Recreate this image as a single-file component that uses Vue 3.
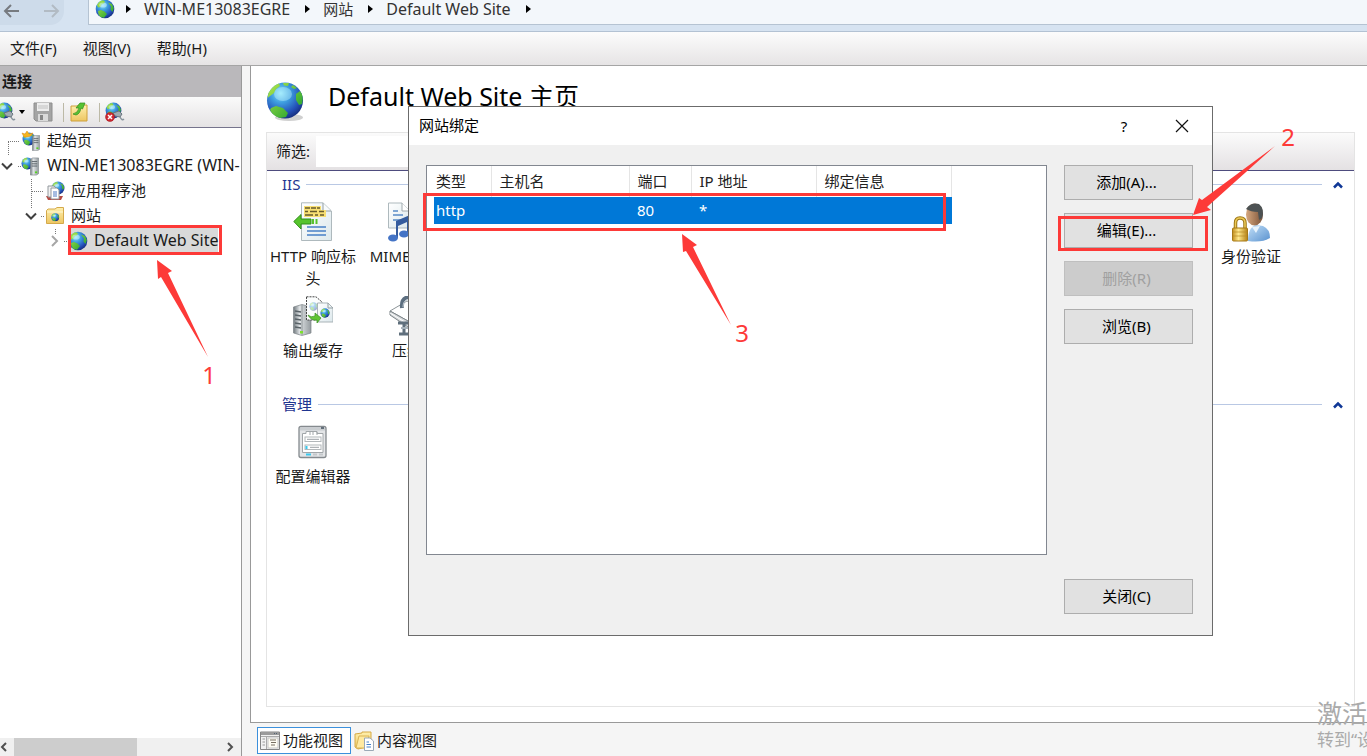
<script setup>
import { ref } from 'vue'

const crumbs = [
  { label: 'WIN-ME13083EGRE', latin: true },
  { label: '网站' },
  { label: 'Default Web Site', latin: true },
]
const menus = ['文件(F)', '视图(V)', '帮助(H)']
const tree = [
  { label: '起始页', icon: 'i-start', level: 0, open: null },
  { label: 'WIN-ME13083EGRE (WIN-', icon: 'i-server', level: 0, open: true, latin: true },
  { label: '应用程序池', icon: 'i-pool', level: 1, open: null },
  { label: '网站', icon: 'i-sites', level: 1, open: true },
  { label: 'Default Web Site', icon: 'i-globe', level: 2, open: false, selected: true, latin: true },
]
const groups = [
  {
    title: 'IIS',
    items: [
      { label: 'HTTP 响应标头', icon: 'i-http' },
      { label: 'MIME 类型', icon: 'i-mime' },
      { label: '身份验证', icon: 'i-auth', last: true },
      { label: '输出缓存', icon: 'i-cache' },
      { label: '压缩', icon: 'i-zip' },
    ],
  },
  { title: '管理', items: [{ label: '配置编辑器', icon: 'i-config' }] },
]
const columns = ['类型', '主机名', '端口', 'IP 地址', '绑定信息']
const bindings = [['http', '', '80', '*', '']]
const filter = ref('')
</script>

<template>
  <div class="app">
    <svg class="defs" aria-hidden="true">
      <defs>
        <radialGradient id="sea" cx="0.38" cy="0.3" r="0.75">
          <stop offset="0" stop-color="#8fe4fb" />
          <stop offset="0.35" stop-color="#3f9fe0" />
          <stop offset="0.75" stop-color="#2450b8" />
          <stop offset="1" stop-color="#142a78" />
        </radialGradient>
        <linearGradient id="land" x1="0" y1="0" x2="1" y2="1">
          <stop offset="0" stop-color="#b6e84c" />
          <stop offset="1" stop-color="#119a2c" />
        </linearGradient>
        <linearGradient id="metal" x1="0" x2="1">
          <stop offset="0" stop-color="#70787d" />
          <stop offset="0.35" stop-color="#dfe3e5" />
          <stop offset="1" stop-color="#949b9f" />
        </linearGradient>
        <linearGradient id="folder" x1="0" y1="0" x2="0" y2="1">
          <stop offset="0" stop-color="#fff0ae" />
          <stop offset="1" stop-color="#edc662" />
        </linearGradient>
        <linearGradient id="paper" x1="0" y1="0" x2="1" y2="1">
          <stop offset="0" stop-color="#ffffff" />
          <stop offset="1" stop-color="#dce8ec" />
        </linearGradient>
        <linearGradient id="skin" x1="0" x2="1">
          <stop offset="0" stop-color="#d6a77e" />
          <stop offset="1" stop-color="#7b5238" />
        </linearGradient>
        <linearGradient id="shirt" x1="0" y1="0" x2="1" y2="1">
          <stop offset="0" stop-color="#c3e0f8" />
          <stop offset="1" stop-color="#5a92cf" />
        </linearGradient>
        <linearGradient id="brass" x1="0" x2="1">
          <stop offset="0" stop-color="#c38f1d" />
          <stop offset="0.4" stop-color="#ffe98c" />
          <stop offset="1" stop-color="#b58114" />
        </linearGradient>
      </defs>
      <symbol id="i-globe" viewBox="0 0 20 20">
        <circle cx="10" cy="10" r="9.3" fill="url(#sea)" />
        <path d="M2 6Q4 2 8 1.300L10 2.500 9 4.500 6.500 5.500 5.500 8 3 8.500ZM13 3.500 17 5 18.800 9 17.500 13 15.500 10.500 16 7.500ZM3 12 6 11 9.500 12.500 12 15 9 18.800 5.500 18 3.500 15.500Z" fill="url(#land)" />
        <ellipse cx="8" cy="6" rx="3.800" ry="2.600" fill="#d7f8ff" opacity="0.5" />
      </symbol>
      <symbol id="i-big" viewBox="0 0 40 40">
        <ellipse cx="23" cy="35.500" rx="14" ry="3.500" fill="#777" opacity="0.35" />
        <circle cx="19" cy="18.500" r="18" fill="url(#sea)" />
        <path d="M2.500 11Q7 3 13 1.500L14 4 10 7 8 11 4 14 1.500 16ZM17 1 23 1 22 4 18 3.500ZM30 12 34 9Q38 14 36 22L33 23 30 18ZM27 3 31 6 28 7 25 5ZM5 26 10 24 17 26 22 31 20 35 14 36Q7 34 4 28Z" fill="url(#land)" />
        <ellipse cx="17" cy="12" rx="9" ry="7" fill="#c8f8ff" opacity="0.4" />
      </symbol>
      <symbol id="tower" viewBox="0 0 10 20">
        <path d="M0.500 2 3 0.500H9.500V18L7 19.500H0.500Z" fill="url(#metal)" stroke="#7d8589" stroke-width="0.700" />
        <path d="M2 4.500H8M2 7H8M2 9.500H8" stroke="#576065" />
        <rect x="5.500" y="15.500" width="2.500" height="2" fill="#55d320" />
      </symbol>
      <symbol id="i-server" viewBox="0 0 20 20">
        <use href="#i-globe" x="0" y="1" width="13" height="13" />
        <use href="#tower" x="9" y="1" width="9" height="19" />
      </symbol>
      <symbol id="i-start" viewBox="0 0 20 20">
        <use href="#i-globe" x="1" y="1" width="14" height="14" />
        <path d="M1 2 4 3 6 0 8 3 12 2 10 5 6 6 3 6Z" fill="#f6b51e" stroke="#dc8710" stroke-width="0.500" />
        <use href="#tower" x="11" y="4" width="8" height="16" />
      </symbol>
      <symbol id="i-pool" viewBox="0 0 20 20">
        <use href="#i-globe" x="6" y="0" width="14" height="14" />
        <path d="M1 15H18L16 19H3Z" fill="#b64a43" />
        <path d="M3 5H9L11 7V16H3Z" fill="#f2f2f2" stroke="#92989d" />
        <path d="M6 7H12L14 9V18H6Z" fill="#fff" stroke="#92989d" />
        <path d="M8 11H12M8 13H12M8 15H12" stroke="#4c7bc4" />
      </symbol>
      <symbol id="i-sites" viewBox="0 0 20 20">
        <path d="M1.500 4.500 3 3H10L12 1.500H18.500V17.500H1.500Z" fill="url(#folder)" stroke="#d4a94b" />
        <path d="M2 6H18" stroke="#fff8d4" />
        <use href="#i-globe" x="6" y="7" width="8.500" height="8.500" />
      </symbol>
      <symbol id="i-plug" viewBox="0 0 20 20">
        <use href="#i-globe" x="0" y="0" width="17" height="17" />
        <path d="M8 11 14 9 17 12 15 15 10 14Z" fill="#9fa9b1" stroke="#68757f" />
        <path d="M15 15Q17 19 19 17" fill="none" stroke="#87939c" stroke-width="1.500" />
      </symbol>
      <symbol id="i-save" viewBox="0 0 20 20">
        <path d="M1 1H19V19H3L1 17Z" fill="#a4a4a4" stroke="#8e8e8e" />
        <rect x="4" y="1" width="12" height="8" fill="#ededed" />
        <path d="M5 4H15M5 6H15" stroke="#c1c1c1" />
        <rect x="5" y="12" width="10" height="7" fill="#dadada" />
        <rect x="7" y="13" width="3" height="5" fill="#868686" />
      </symbol>
      <symbol id="i-up" viewBox="0 0 20 20">
        <path d="M2 4H8L10 3H18V19H2Z" fill="url(#folder)" stroke="#cfa03a" />
        <path d="M4 12Q9 11 10 6L7 6 11 1 16 1 13.500 7 12 6Q11 12 7 13Z" fill="#56c233" stroke="#318c1d" stroke-width="0.700" />
      </symbol>
      <symbol id="i-stop" viewBox="0 0 20 20">
        <use href="#i-plug" width="20" height="20" />
        <circle cx="5" cy="15" r="4.500" fill="#cf2730" stroke="#9a141d" stroke-width="0.500" />
        <path d="M3 13 7 17M7 13 3 17" stroke="#fff" stroke-width="1.500" />
      </symbol>
      <symbol id="i-http" viewBox="0 0 40 40">
        <path d="M8.500 0.800H30L38.500 9V38.500H8.500Z" fill="url(#paper)" stroke="#aeb9bd" />
        <path d="M30 1V9H38" fill="#f8fbfc" stroke="#929da2" />
        <path d="M11 4H28V8H33V15H11Z" fill="#f8df73" />
        <path d="M12 6H17M18 6H23M24 6H27M12 9.500H15M17 9.500H24M26 9.500H31M12 13H20M22 13H25M27 13H31" stroke="#665b2c" stroke-width="1.500" />
        <path d="M0.800 19.500 8 12.500V17H18V22H8V27Z" fill="#57c42d" stroke="#31901a" />
        <path d="M20 17V22M23.500 17V22" stroke="#57c42d" stroke-width="2" />
        <path d="M14 25H33M14 29H33M14 33H33" stroke="#4780c6" stroke-width="1.500" />
      </symbol>
      <symbol id="i-mime" viewBox="0 0 40 40">
        <path d="M1.500 1H15L23 9V26H1.500Z" fill="url(#paper)" stroke="#aeb9bd" />
        <path d="M15 1V9H23" fill="#fff" stroke="#a1aaae" />
        <path d="M6 9H11M6 13H16M6 18H17" stroke="#588ac6" stroke-width="1.500" />
        <path d="M9 19 23 13V31H20V20L11 24V36H9Z" fill="#355c9e" />
        <ellipse cx="6" cy="36" rx="5" ry="3.500" fill="#4474c6" />
        <ellipse cx="17" cy="32" rx="5" ry="3.500" fill="#4474c6" />
        <path d="M23 13Q29 16 28 24L23 18Z" fill="#355c9e" />
      </symbol>
      <symbol id="i-cache" viewBox="0 0 40 40">
        <path d="M0.500 11 9 8.500 18 11V37L9 39.500 0.500 37Z" fill="url(#metal)" stroke="#7b8387" stroke-width="0.700" />
        <path d="M9 9V39" stroke="#8e9699" />
        <path d="M2 15 8 16M2 19 8 20M2 23 8 24M2 27 8 28M2 31 8 32" stroke="#596267" stroke-width="1.300" />
        <rect x="7" y="35" width="3" height="2.500" fill="#7ce02c" />
        <path d="M13.500 0.800H23L29 6V24H13.500Z" fill="#fbfdfd" stroke="#444" stroke-dasharray="2 1" />
        <use href="#i-globe" x="16" y="6" width="9" height="9" opacity="0.4" />
        <path d="M24.500 7H35L40 12V26H24.500Z" fill="url(#paper)" stroke="#a9b3b7" />
        <path d="M35 7V12H40" fill="none" stroke="#929da2" />
        <use href="#i-globe" x="27" y="12" width="10" height="10" />
        <path d="M15 19Q18 22 22 20V17L28 22 24 27V24Q18 25 15 19Z" fill="#61c534" stroke="#388f20" stroke-width="0.700" />
      </symbol>
      <symbol id="i-zip" viewBox="0 0 40 40">
        <path d="M3 15 20 5 38 13 21 25Z" fill="#fff" stroke="#8d9599" />
        <path d="M3 15V19L21 31 38 18V13L21 25Z" fill="#d5d8da" stroke="#7d8589" />
        <path d="M3 17 21 28 38 16" fill="none" stroke="#fff" />
        <path d="M15 12Q14 2 22 1" fill="none" stroke="#5d6f80" stroke-width="4" />
        <path d="M16 11Q16 4 22 3" fill="none" stroke="#c5ced5" />
        <path d="M11 27H24M17 27V37M12 38H25" stroke="#5f6f7c" stroke-width="3" />
        <path d="M14 32H22" stroke="#a7b2ba" stroke-width="2" />
      </symbol>
      <symbol id="i-auth" viewBox="0 0 40 40">
        <path d="M17 39Q17 25 25 23L32 24Q39 27 39 36Q31 41 17 39Z" fill="url(#shirt)" />
        <path d="M21 25 25 31 29 24" fill="#e9f4fd" />
        <ellipse cx="23.500" cy="12.500" rx="8.500" ry="11" fill="url(#skin)" />
        <path d="M15 7Q20 0 28 2Q34 7 31 16L28 18 27 10Q20 10 15 7Z" fill="#4d5253" />
        <path d="M4.500 27V21Q4.500 16 9 16Q14 16 14 21V27" fill="none" stroke="#9c7515" stroke-width="3.500" />
        <path d="M4.500 27V21Q4.500 16 9 16Q14 16 14 21V27" fill="none" stroke="#ebc957" stroke-width="1.500" />
        <rect x="1.500" y="26" width="15" height="13" rx="1" fill="url(#brass)" stroke="#a67917" />
        <path d="M2 30H16M2 34H16" stroke="#b88a24" stroke-width="0.700" />
      </symbol>
      <symbol id="i-config" viewBox="0 0 40 40">
        <rect x="6" y="4.500" width="27" height="31" rx="2" fill="#e3e5e7" stroke="#858a8e" stroke-width="1.300" />
        <path d="M7 7H32" stroke="#c9cdd0" stroke-width="3" />
        <path d="M28 6H31" stroke="#42515e" stroke-width="1.500" />
        <path d="M9.500 11.500H13V9.500H24V11.500H30V30.500H9.500Z" fill="#fff" stroke="#a1a6a9" />
        <path d="M17 10V13M20 10V13M24 10V13" stroke="#a1a6a9" />
        <rect x="12" y="15" width="16" height="4.500" fill="#fff" stroke="#b2b7ba" />
        <rect x="12" y="23" width="16" height="4.500" fill="#fff" stroke="#b2b7ba" />
        <path d="M14 17.300H26M17 25.300H26" stroke="#9ba1a6" />
        <path d="M13.500 24V27M13 32.500H18" stroke="#38c8ee" stroke-width="2" />
        <path d="M20 32.500H24M26 32.500H30" stroke="#c4c8cb" stroke-width="2" />
      </symbol>
      <symbol id="i-features" viewBox="0 0 20 20">
        <path d="M0.500 1H19.500V18.500H0.500Z" fill="#f1f1f1" stroke="#858585" />
        <path d="M1 2.500H19" stroke="#9b9b9b" stroke-width="3" />
        <path d="M14 2.500H18" stroke="#526273" stroke-dasharray="1 1" />
        <path d="M1 5.500H19M6.500 5.500V18" stroke="#a9a9a9" />
        <path d="M2.500 8H5M2.500 11H5M2.500 14H5" stroke="#999" />
        <rect x="8" y="7" width="10" height="10" fill="#fffdf4" stroke="#c5c5c5" />
        <path d="M10 9H16M11 11.500H16M11 14H15" stroke="#776f61" />
      </symbol>
      <symbol id="i-content" viewBox="0 0 20 20">
        <path d="M1 3 8 2V1H17V15L4 18 1 16Z" fill="url(#folder)" stroke="#d6a944" />
        <path d="M5 5H15L12 17H2Z" fill="#ffe9a0" stroke="#dab455" />
        <path d="M10.500 7H16L19.500 10V19.500H10.500Z" fill="#fff" stroke="#9ba9b6" />
        <path d="M12.500 11H15M12.500 13.500H17M12.500 16H17" stroke="#4481c8" />
      </symbol>
    </svg>

    <header class="address">
      <nav class="history" aria-label="历史记录">
        <button aria-label="后退"><svg width="17" height="16" viewBox="0 0 17 16"><path d="M16 8H2M8 2 2 8 8 14" fill="none" stroke="#777b80" stroke-width="2" /></svg></button>
        <button aria-label="前进" disabled><svg width="17" height="16" viewBox="0 0 17 16"><path d="M1 8H15M9 2 15 8 9 14" fill="none" stroke="#b2bbc4" stroke-width="2" /></svg></button>
      </nav>
      <nav class="crumbs" aria-label="地址">
        <svg width="20" height="20"><use href="#i-globe" /></svg>
        <i class="tri"></i>
        <template v-for="c in crumbs" :key="c.label">
          <a href="#" :class="{ latin: c.latin }">{{ c.label }}</a>
          <i class="tri"></i>
        </template>
      </nav>
    </header>

    <nav class="menubar" aria-label="菜单">
      <button v-for="m in menus" :key="m">{{ m }}</button>
    </nav>

    <div class="body">
      <aside class="side">
        <h2>连接</h2>
        <div class="tools">
          <button class="connect" aria-label="连接"><svg width="20" height="20"><use href="#i-plug" /></svg><i class="drop"></i></button>
          <button aria-label="保存" disabled><svg width="20" height="20"><use href="#i-save" /></svg></button>
          <i class="sep"></i>
          <button aria-label="向上"><svg width="20" height="20"><use href="#i-up" /></svg></button>
          <i class="sep"></i>
          <button aria-label="断开"><svg width="20" height="20"><use href="#i-stop" /></svg></button>
        </div>
        <ul class="tree">
          <svg class="lines" width="80" height="130" aria-hidden="true">
            <path d="M8 13.500H20M8.500 14V28M18 38.500H22M31.500 51V80M32 63.500H44M41 88.500H45M55.500 101V106M64 113.500H68" fill="none" stroke="#777" stroke-dasharray="1 1" />
          </svg>
          <li v-for="n in tree" :key="n.label" :class="['level' + n.level, { selected: n.selected }]">
            <svg class="toggle" width="14" height="14" viewBox="0 0 14 14">
              <path v-if="n.open" d="M2 4.500 7 9.500 12 4.500" fill="none" stroke="#404040" stroke-width="2" />
              <path v-else-if="n.open === false" d="M5 2 10 7 5 12" fill="none" stroke="#a6a6a6" stroke-width="2" />
            </svg>
            <a href="#"><svg width="20" height="20"><use :href="'#' + n.icon" /></svg><span :class="{ latin: n.latin }">{{ n.label }}</span></a>
          </li>
        </ul>
        <div class="scroll">
          <svg width="14" height="14" viewBox="0 0 14 14"><path d="M6 3 2 7 6 11" fill="none" stroke="#505050" stroke-width="2" /></svg>
          <div class="track"><div class="thumb"></div></div>
          <svg width="14" height="14" viewBox="0 0 14 14"><path d="M5 3 9 7 5 11" fill="none" stroke="#505050" stroke-width="2" /></svg>
        </div>
      </aside>

      <main class="main">
        <section class="page">
          <h1><svg width="40" height="40"><use href="#i-big" /></svg>Default Web Site 主页</h1>
          <div class="panel">
            <div class="filter">
              <label for="filter">筛选:</label>
              <input id="filter" v-model="filter" type="text" />
            </div>
            <section v-for="g in groups" :key="g.title" class="group">
              <h3>
                <span>{{ g.title }}</span>
                <svg width="12" height="8" viewBox="0 0 12 8"><path d="M2 6.500 6 2.500 10 6.500" fill="none" stroke="#0f3796" stroke-width="2.500" /></svg>
              </h3>
              <div class="items">
                <a v-for="f in g.items" :key="f.label" href="#" :class="{ last: f.last }">
                  <svg width="40" height="40"><use :href="'#' + f.icon" /></svg>
                  <span>{{ f.label }}</span>
                </a>
              </div>
            </section>
          </div>
        </section>
        <div class="views">
          <button class="active"><svg width="20" height="20"><use href="#i-features" /></svg><span>功能视图</span></button>
          <button><svg width="20" height="20"><use href="#i-content" /></svg><span>内容视图</span></button>
        </div>
      </main>
    </div>

    <div class="dialog" role="dialog" aria-labelledby="dialog-title">
      <div class="titlebar">
        <span id="dialog-title">网站绑定</span>
        <button aria-label="帮助">?</button>
        <button aria-label="关闭窗口"><svg width="14" height="14" viewBox="0 0 14 14"><path d="M1 1 13 13M13 1 1 13" stroke="#111" stroke-width="1.200" /></svg></button>
      </div>
      <div class="content">
        <div class="list">
          <table>
            <thead><tr><th v-for="(c, i) in columns" :key="c" :class="'c' + i">{{ c }}</th></tr></thead>
            <tbody><tr v-for="b in bindings" :key="b[0]"><td v-for="(v, i) in b" :key="i">{{ v }}</td></tr></tbody>
          </table>
        </div>
        <div class="actions">
          <button>添加(A)...</button>
          <button>编辑(E)...</button>
          <button disabled>删除(R)</button>
          <button>浏览(B)</button>
          <button class="close">关闭(C)</button>
        </div>
      </div>
    </div>

    <div class="watermark"><p>激活</p><small>转到“设</small></div>

    <svg class="marks" width="1367" height="756">
      <g fill="#fd3a38" fill-rule="evenodd">
        <path d="M68 225H222V255H68ZM71 228V252H219V228Z" />
        <path d="M1058 216H1208V251H1058ZM1061 219V248H1205V219Z" />
        <path d="M423 193H946V231H423ZM426 196V228H943V196Z" />
        <path d="M157 260 172 271 168 273 208 357 161 277 158 279Z" />
        <path d="M1193 215 1199 198 1202 200 1275 146 1207 207 1211 210Z" />
        <path d="M682 234 697 245 693 247 731 325 686 251 683 252Z" />
        <text x="209" y="384">1</text>
        <text x="1288" y="146">2</text>
        <text x="742" y="342">3</text>
      </g>
    </svg>
  </div>
</template>

<style>
body { overflow: hidden; }
</style>

<style scoped>
.app {
  position: relative;
  display: flex;
  flex-direction: column;
  height: 100vh;
  overflow: hidden;
  background: #f5f5f5;
  color: #1a1a1a;
  font: 15px/22px "Noto Sans", "Noto Sans CJK SC", sans-serif;
}
.app * { box-sizing: border-box; }
.defs { position: absolute; width: 0; height: 0; }
svg { display: block; flex: none; }
button { font: inherit; color: inherit; background: none; border: 0; padding: 0; }
a { color: inherit; text-decoration: none; }
h1, h2, h3, p, ul { margin: 0; padding: 0; font-weight: 400; }
.latin { font-size: 16px; }

.address { display: flex; height: 32px; background: #d6e3f1; border-bottom: 1px solid #b3c2d3; flex: none; }
.history { display: flex; gap: 23px; width: 64px; height: 25px; margin-right: 24px; padding: 3px 0 6px 3px; background: #cddbea; border-radius: 0 0 14px 0; }
.crumbs { flex: 1; display: flex; align-items: center; height: 25px; padding: 0 0 6px 6px; border: 1px solid #b5c3d2; border-width: 0 0 1px 1px; background: #f3f7fb; color: #333; }
.crumbs a { margin: 0 15px 0 13px; white-space: nowrap; }
.tri { flex: none; border: 4px solid transparent; border-left: 5px solid #000; border-right: 0; }
.crumbs svg + .tri { margin-left: 11px; }

.menubar { display: flex; gap: 26px; height: 34px; padding: 0 0 2px 10px; flex: none; background: linear-gradient(#fcfcfc, #e6e4e5); border-bottom: 1px solid #a5a5a5; }
.body { display: flex; flex: 1; min-height: 0; }

.side { display: flex; flex-direction: column; width: 242px; flex: none; background: #fff; border-right: 1px solid #999; }
.side h2 { height: 31px; padding-left: 2px; line-height: 31px; font-size: 15px; font-weight: 700; background: #bab8bb; }
.tools { display: flex; align-items: center; height: 31px; background: linear-gradient(#fafafa, #e5e3e4); border-bottom: 1px solid #76748c; }
.connect { display: flex; align-items: center; gap: 3px; margin: 0 8px 0 -4px; }
.drop { border: 3px solid transparent; border-top: 4px solid #000; border-bottom: 0; }
.sep { width: 1px; height: 19px; margin: 0 5px 0 10px; background: #bcb9a6; }
.tree { position: relative; flex: 1; list-style: none; overflow: hidden; }
.lines { position: absolute; left: 0; top: 0; }
.tree li { position: relative; display: flex; align-items: center; height: 25px; white-space: nowrap; }
.tree a { display: flex; align-items: center; gap: 6px; height: 25px; margin-left: 7px; }
.tree span { padding-bottom: 2px; }
.level1 { padding-left: 24px; }
.level2 { padding-left: 47px; }
.selected a { background: #d9d9d9; }
.scroll { display: flex; align-items: center; height: 18px; background: #f0f0f0; }
.scroll > svg:last-child { margin-right: 4px; }
.track { flex: 1; height: 18px; }
.thumb { width: 59%; height: 18px; background: #cdcdcd; }

.main { display: flex; flex-direction: column; flex: 1; min-width: 0; margin-left: 8px; }
.page { display: flex; flex-direction: column; flex: 1; min-height: 0; padding: 14px 12px 15px 15px; background: #fff; border: 1px solid #999; border-width: 0 0 1px 1px; }
h1 { display: flex; gap: 22px; height: 44px; margin-bottom: 8px; font-size: 25px; line-height: 32px; color: #000; white-space: nowrap; }
h1 svg { margin-top: 2px; }
.panel { flex: 1; border: 1px solid #e4e4e4; }
.filter { display: flex; align-items: center; gap: 6px; height: 38px; padding-left: 9px; background: linear-gradient(#fbfbfb, #e4e1e3); border-bottom: 1px solid #4e4c7e; }
.filter label { padding-bottom: 2px; }
.filter input { width: 240px; height: 31px; border: 0; background: #fff; }
.group { height: 220px; }
h3 { display: flex; align-items: center; gap: 10px; height: 27px; padding: 0 10px 0 15px; font-size: 15px; color: #1f3590; }
h3::before { content: ""; order: 1; flex: 1; height: 1px; background: #b9c8e4; }
h3 span { margin-right: -4px; padding-bottom: 2px; }
h3 svg { order: 2; }
.items { display: grid; grid-template-columns: repeat(10, 94px) 90px; grid-auto-rows: 84px; row-gap: 10px; padding-top: 4px; margin-left: -1px; }
.items a { display: flex; flex-direction: column; align-items: center; gap: 3px; text-align: center; padding: 0 2px; }
.items .last { grid-column: 11; }
.views { display: flex; height: 33px; padding: 4px 0 2px 7px; background: #f5f5f5; flex: none; }
.views button { display: flex; align-items: center; gap: 3px; padding: 0 7px 0 2px; border: 1px solid transparent; }
.views span { padding-bottom: 2px; }
.views .active { border: 1px solid #3b90dc; background: #fff; }

.dialog { position: absolute; left: 408px; top: 106px; width: 805px; height: 530px; display: flex; flex-direction: column; border: 1px solid #6b6b6b; background: #f0f0f0; color: #000; }
.titlebar { display: flex; align-items: center; height: 38px; padding: 0 12px 0 10px; background: #fff; }
.titlebar span { flex: 1; padding-bottom: 2px; }
.titlebar button { width: 36px; height: 32px; display: grid; place-items: center; margin-left: 22px; }
.content { display: flex; flex: 1; gap: 17px; padding: 20px 19px 21px 17px; }
.list { flex: 1; height: 390px; padding-left: 7px; border: 1px solid #828790; background: #fff; }
table { width: 518px; table-layout: fixed; border-collapse: collapse; text-align: left; color: #222; }
th, td { font-weight: 400; padding: 0 0 2px 8px; white-space: nowrap; }
th { height: 31px; border-right: 1px solid #e5e5e5; }
td { height: 27px; background: #0078d7; color: #fff; }
th:first-child, td:first-child { padding-left: 2px; }
.c0 { width: 57px; }
.c1 { width: 138px; }
.c2 { width: 62px; }
.c3 { width: 125px; }
.actions { display: flex; flex-direction: column; gap: 13px; width: 129px; }
.actions button { height: 35px; padding: 0 4px 2px 0; border: 1px solid #adadad; background: #e1e1e1; }
.actions button:disabled { background: #ccc; border-color: #bfbfbf; color: #a0a0a0; }
.actions .close { margin-top: auto; }

.watermark { position: absolute; left: 1317px; right: 0; bottom: 4px; overflow: hidden; white-space: nowrap; color: #aaa; }
.watermark p { font-size: 25px; line-height: 30px; }
.watermark small { display: block; font-size: 17px; line-height: 24px; }
.marks { position: absolute; left: 0; top: 0; pointer-events: none; }
.marks text { font-size: 24px; text-anchor: middle; }
</style>
